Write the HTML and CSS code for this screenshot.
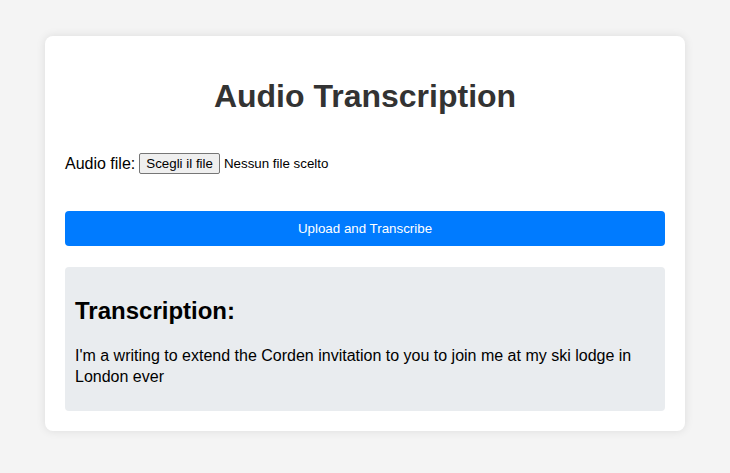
FILE: index.html
```html
<!DOCTYPE html>
<html lang="it">
<head>
<meta charset="utf-8">
<title>Audio Transcription</title>
<link rel="stylesheet" href="styles.css">
</head>
<body>
<div class="card">
  <h1 class="title">Audio Transcription</h1>
  <form class="form">
    <div class="field">
      <label class="label" for="audio">Audio file:</label>
      <span class="file">
        <button class="file-btn" type="button" id="audio">Scegli il file</button>
        <span class="file-name">Nessun file scelto</span>
      </span>
    </div>
    <button class="submit" type="button">Upload and Transcribe</button>
  </form>
  <div class="result">
    <h2 class="result-title">Transcription:</h2>
    <p class="result-text">I'm a writing to extend the Corden invitation to you to join me at my ski lodge in London ever</p>
  </div>
</div>
</body>
</html>
```
FILE: styles.css
```css
html, body {
  margin: 0;
  padding: 0;
}
body {
  background: #f4f4f4;
  font-family: "Liberation Sans", Arial, sans-serif;
  color: #000;
  padding: 36px 0;
}
.card {
  width: 600px;
  margin: 0 auto;
  padding: 20px;
  background: #fff;
  border-radius: 8px;
  box-shadow: 0 0 10px rgba(0, 0, 0, 0.1);
}
.title {
  font-size: 32px;
  font-weight: bold;
  color: #333;
  text-align: center;
  margin: 22px 0 0;
}
.form {
  margin-top: 38px;
}
.field {
  display: flex;
  align-items: center;
  gap: 4px;
  font-size: 16px;
}
.file {
  display: flex;
  align-items: center;
  gap: 4px;
  font-size: 13.33px;
}
.file-btn {
  font-family: "Liberation Sans", Arial, sans-serif;
  font-size: 13.33px;
  color: #000;
  background: #efefef;
  border: 1px solid #767676;
  border-radius: 2px;
  padding: 2px 6px;
}
.submit {
  display: block;
  width: 100%;
  margin-top: 37px;
  padding: 10px;
  border: none;
  border-radius: 4px;
  background: #007bff;
  color: #fff;
  font-family: "Liberation Sans", Arial, sans-serif;
  font-size: 13.33px;
}
.result {
  margin-top: 21px;
  padding: 10px;
  background: #e9ecef;
  border-radius: 4px;
}
.result-title {
  font-size: 24px;
  margin: 20px 0;
}
.result-text {
  font-size: 16px;
  line-height: 21px;
  margin: 0 0 14px;
}
```
